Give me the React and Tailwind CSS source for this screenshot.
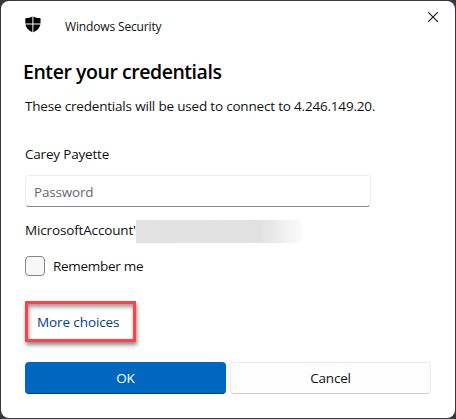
import React from "react";

function Shield() {
  return (
    <svg className="block" width="16" height="17" viewBox="0 0 16 17" fill="#000">
      <path d="M7.4 0.6 C5.6 1.9 3.2 2.3 0.3 2.3 V7.5 H7.4 Z" />
      <path d="M8.4 0.6 C10.2 1.9 12.6 2.3 15.5 2.3 V7.5 H8.4 Z" />
      <path d="M0.4 8.5 H7.4 V16.2 C3.6 14.4 0.9 11.8 0.4 8.5 Z" />
      <path d="M15.4 8.5 H8.4 V16.2 C12.2 14.4 14.9 11.8 15.4 8.5 Z" />
    </svg>
  );
}

function CloseButton() {
  return (
    <button type="button" aria-label="Close" className="mt-[11px] -mr-px h-[11px] w-[11px]">
      <svg className="block" width="11" height="11" viewBox="0 0 11 11" stroke="#111" strokeWidth="1.1">
        <path d="M0.2 0.2 L9.8 9.8 M9.8 0.2 L0.2 9.8" />
      </svg>
    </button>
  );
}

export default function App() {
  return (
    <div className="h-[419px] w-[456px] overflow-hidden bg-[#38373a] p-px">
      <main className="flex h-[417px] w-[454px] flex-col rounded-lg bg-white pr-[17px] pl-6 font-['Open_Sans','Noto_Sans',sans-serif] text-[13.5px] leading-5 tracking-[-0.19px] whitespace-nowrap text-[#111]">
        <header className="flex h-[58px] items-start">
          <div className="mt-[15px]">
            <Shield />
          </div>
          <span className="mt-4 ml-6 text-xs leading-5 tracking-[-0.15px]">Windows Security</span>
          <div className="ml-auto">
            <CloseButton />
          </div>
        </header>
        <h1 className="-ml-[2px] h-7 text-[19.5px] leading-[26px] font-semibold tracking-[-0.45px] text-black">Enter your credentials</h1>
        <p className="mt-[9px] h-5">These credentials will be used to connect to 4.246.149.20.</p>
        <p className="mt-7 h-5">Carey Payette</p>
        <input
          type="text"
          placeholder="Password"
          className="mt-[11px] h-8 w-[346px] shrink-0 rounded border border-[#ededed] border-b-[#868686] bg-white px-2 pt-px outline-none placeholder:text-[#686868]"
        />
        <div className="mt-[13px] flex h-[23px] items-start">
          <span className="w-[111px] tracking-[-0.15px]">MicrosoftAccount'</span>
          <span className="h-[23px] w-[165px] bg-linear-to-r from-[#e3e3e3] via-[#e1e1e1] via-75% to-[#fbfbfb]" />
        </div>
        <label className="mt-[13px] flex h-5 items-center">
          <span className="h-5 w-5 rounded border border-[#868686] bg-[#f7f7f7]" />
          <span className="ml-2 tracking-[-0.28px]">Remember me</span>
        </label>
        <a className="mt-[25px] flex h-[41px] w-[111px] shrink-0 items-center border-[3px] border-[#fa4447] pl-[9px] tracking-[-0.1px] text-[#003e92] shadow-[1px_3px_4px_rgba(0,0,0,0.45),inset_1px_3px_4px_rgba(0,0,0,0.4)]">
          More choices
        </a>
        <div className="mt-5 flex gap-1">
          <button className="h-8 w-[201px] rounded border-b border-[#00438a] bg-[#0067c0] text-white">OK</button>
          <button className="h-8 w-[201px] rounded border border-[#ececec] border-b-[#cfcfcf] bg-[#fefefe]">Cancel</button>
        </div>
      </main>
    </div>
  );
}
